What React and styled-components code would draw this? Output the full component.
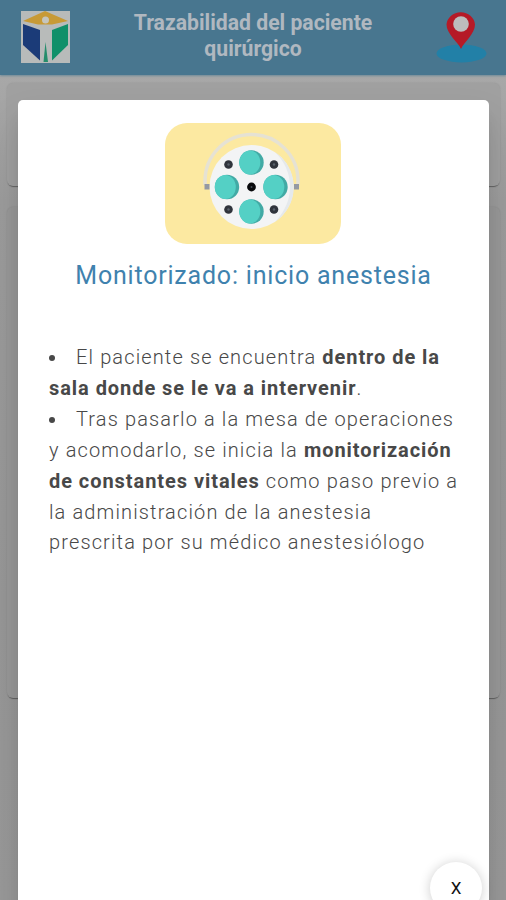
import React from 'react';
import styled, { createGlobalStyle } from 'styled-components';

const GlobalStyle = createGlobalStyle`
  * { box-sizing: border-box; }
  body {
    margin: 0;
    font-family: Roboto, "Liberation Sans", sans-serif;
    background: #9b9b9b;
  }
`
const Page = styled.div`
  position: relative;
  height: 900px;
  overflow: hidden;
  background: linear-gradient(#a8a8a8 75px, #9c9c9c 200px, #979797 600px, #999999);
`
const Header = styled.header`
  height: 75px;
  padding: 11px 19px 0 21px;
  display: flex;
  justify-content: space-between;
  align-items: flex-start;
  background-color: #48768f;
  box-shadow: 0 1px 2px rgba(72,118,143,0.6);
`
const AppTitle = styled.h1`
  width: 260px;
  margin: -1px 0 0;
  text-align: center;
  font-size: 21.2px;
  font-weight: 700;
  line-height: 26px;
  color: #b0b8c0;
`
const Cards = styled.main`
  padding: 8px 6px 0 7px;
  display: flex;
  flex-direction: column;
  gap: 21px;
`
const Card = styled.section`
  height: ${props => props.height}px;
  border-radius: 6px;
  background-color: ${props => props.color};
  box-shadow: 0 2px 1px -1px rgba(0,0,0,0.35), 0 0 2px rgba(0,0,0,0.12);
`
const Overlay = styled.div`
  position: absolute;
  inset: 0;
  padding: 100px 17px 0 18px;
`
const Modal = styled.div`
  height: 830px;
  padding: 23px 31px 0 31px;
  display: flex;
  flex-direction: column;
  align-items: center;
  border-radius: 5px;
  background-color: #ffffff;
  box-shadow: 0 11px 15px -7px rgba(0,0,0,0.2), 0 24px 38px 3px rgba(0,0,0,0.1);
`
const Picture = styled.div`
  width: 176px;
  height: 121px;
  margin-right: 2px;
  border-radius: 22px;
  background-color: #fce9a1;
`
const StepTitle = styled.h2`
  margin: 17px 0 0;
  font-size: 25px;
  font-weight: 400;
  line-height: 30px;
  letter-spacing: 0.8px;
  white-space: nowrap;
  color: #3f82ae;
`
const Steps = styled.ul`
  width: 100%;
  margin: 51px 0 0;
  padding: 0;
  list-style-position: inside;
  font-size: 20px;
  font-weight: 300;
  line-height: 30.9px;
  letter-spacing: 1.13px;
  color: #484848;
`
const Step = styled.li`
  white-space: nowrap;
`
const Strong = styled.strong`
  font-weight: 700;
  letter-spacing: 0.94px;
`
const CloseButton = styled.button`
  position: absolute;
  left: 430px;
  top: 862px;
  width: 52px;
  height: 52px;
  padding: 0;
  border: 0;
  border-radius: 50%;
  background-color: #ffffff;
  box-shadow: 0 1px 12px rgba(0,0,0,0.2);
  font-family: inherit;
  font-size: 17px;
  color: #111111;
`

const Logo = () => (
  <svg width="49" height="52" viewBox="0 0 49 52">
    <rect width="49" height="52" fill="#b8bbba" />
    <path d="M2 10 L24 0 L47 10 L31 13.500 H17Z" fill="#c79a36" />
    <circle cx="24.500" cy="9" r="3.500" fill="#c5c5bd" />
    <path d="M2 13 L19 19 V49.500 L2 34Z" fill="#1b3b78" />
    <path d="M47 13 L31 19 V49.500 L47 34Z" fill="#10906a" />
    <path d="M24.500 31 L27 51 H22.500Z" fill="#258d6b" />
  </svg>
)

const MapPin = () => (
  <svg width="51" height="53" viewBox="0 0 51 53">
    <ellipse cx="25.500" cy="42.500" rx="25" ry="9" fill="#2280a7" />
    <path d="M25 38 C22 31 10.500 23 10.500 13.500 A14.300 13.500 0 0 1 39 13.500 C39 23 28 31 25 38Z" fill="#b51a27" />
    <circle cx="25" cy="13" r="7.800" fill="#bdbdbd" />
  </svg>
)

const lenses = [[86.5, 39.5], [62, 64], [110.5, 64], [86.5, 88.5]]
const screws = [[63.500, 41.5], [109, 41.5], [63.500, 86.5], [109, 86.5]]

const SurgicalLamp = () => (
  <svg width="176" height="121" viewBox="0 0 176 121">
    <path d="M40 62 V58 A46.500 46.500 0 0 1 133 58 V62" fill="none" stroke="#e6e2d3" strokeWidth="3.500" />
    <circle cx="86.500" cy="64" r="42" fill="#f3f4f5" />
    <path d="M110 29 A42 42 0 0 1 110 99 Q125 83 125 64 Q125 44 110 29Z" fill="#e5e9ec" />
    <rect x="39.500" y="61" width="5" height="5.500" fill="#9499a3" />
    <rect x="129" y="61" width="5" height="5.500" fill="#9499a3" />
    {lenses.map(([x, y]) => (
      <g key={`${x}-${y}`}>
        <circle cx={x} cy={y} r="12.200" fill="#42aaa5" />
        <ellipse cx={x - 1.7} cy={y} rx="10.500" ry="12" fill="#54d0c5" />
      </g>
    ))}
    {screws.map(([x, y]) => (
      <g key={`${x}-${y}`}>
        <circle cx={x} cy={y} r="4.300" fill="#30343c" />
        <circle cx={x} cy={y} r="1.200" fill="#59616b" />
      </g>
    ))}
    <circle cx="86.500" cy="64" r="4.400" fill="#08090c" />
    <circle cx="86.500" cy="64" r="1" fill="#444b55" />
  </svg>
)

const StepModal = () => (
  <Overlay>
    <Modal>
      <Picture>
        <SurgicalLamp />
      </Picture>
      <StepTitle>Monitorizado: inicio anestesia</StepTitle>
      <Steps>
        <Step>
          El paciente se encuentra <Strong>dentro de la<br />
          sala donde se le va a intervenir</Strong>.
        </Step>
        <Step>
          Tras pasarlo a la mesa de operaciones<br />
          y acomodarlo, se inicia la <Strong>monitorización<br />
          de constantes vitales</Strong> como paso previo a<br />
          la administración de la anestesia<br />
          prescrita por su médico anestesiólogo
        </Step>
      </Steps>
    </Modal>
    <CloseButton>X</CloseButton>
  </Overlay>
)

const App = () => (
  <Page>
    <GlobalStyle />
    <Header>
      <Logo />
      <AppTitle>Trazabilidad del paciente quirúrgico</AppTitle>
      <MapPin />
    </Header>
    <Cards>
      <Card height={103} color="#a0a0a0" />
      <Card height={491} color="#989898" />
    </Cards>
    <StepModal />
  </Page>
)

export default App;
